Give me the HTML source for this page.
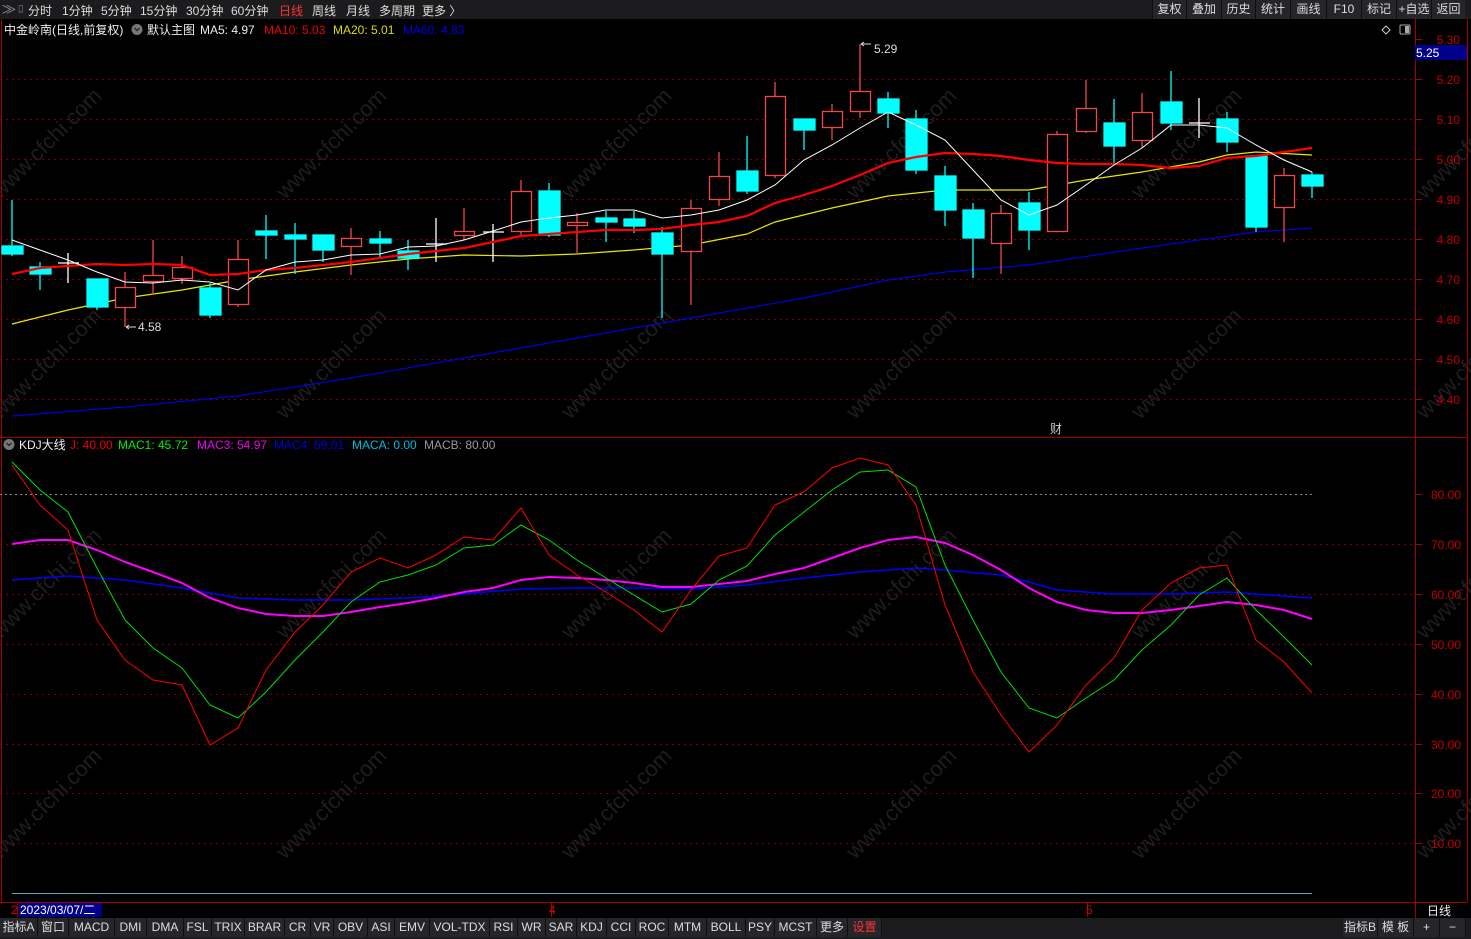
<!DOCTYPE html>
<html><head><meta charset="utf-8"><style>
*{margin:0;padding:0;box-sizing:border-box}
body{width:1471px;height:939px;background:#000;overflow:hidden;font-family:"Liberation Sans","Noto Sans CJK SC",sans-serif;position:relative}
.top{position:absolute;left:0;top:0;width:1471px;height:19px;background:#1c1c1e;color:#ddd;font-size:12px}
.top span{position:absolute;top:2px}
.tb{position:absolute;top:0;height:19px;background:#26262a;border-left:1px solid #0e0e0e;color:#ddd;font-size:12px;text-align:center;line-height:19px}
.bot{position:absolute;left:0;top:918px;width:1471px;height:21px;background:#1c1c1e}
.bt{position:absolute;top:0;height:19px;background:#26262a;color:#ddd;font-size:12px;line-height:19px;text-align:center;border-right:1px solid #0e0e0e}
svg{position:absolute;left:0;top:0}
</style></head><body>
<div class="top">
<span style="left:2px;color:#888">⨠▯</span>
<span style="left:28px">分时</span><span style="left:62px">1分钟</span><span style="left:101px">5分钟</span><span style="left:140px">15分钟</span><span style="left:186px">30分钟</span><span style="left:231px">60分钟</span><span style="left:279px;color:#f33">日线</span><span style="left:312px">周线</span><span style="left:346px">月线</span><span style="left:379px">多周期</span><span style="left:422px">更多 〉</span>
</div>
<div class="tb" style="left:1152px;width:34px">复权</div>
<div class="tb" style="left:1186px;width:35px">叠加</div>
<div class="tb" style="left:1221px;width:34px">历史</div>
<div class="tb" style="left:1255px;width:35px">统计</div>
<div class="tb" style="left:1290px;width:36px">画线</div>
<div class="tb" style="left:1326px;width:35px">F10</div>
<div class="tb" style="left:1361px;width:35px">标记</div>
<div class="tb" style="left:1396px;width:35px">+自选</div>
<div class="tb" style="left:1431px;width:34px">返回</div>

<svg width="1471" height="939" viewBox="0 0 1471 939" font-family="Liberation Sans, Noto Sans CJK SC, sans-serif" font-size="12">
<!-- watermarks -->
<g fill="#1e1e1e" font-size="22">
<text transform="translate(0,200) rotate(-45)">www.cfchi.com</text>
<text transform="translate(285,200) rotate(-45)">www.cfchi.com</text>
<text transform="translate(570,200) rotate(-45)">www.cfchi.com</text>
<text transform="translate(855,200) rotate(-45)">www.cfchi.com</text>
<text transform="translate(1140,200) rotate(-45)">www.cfchi.com</text>
<text transform="translate(1425,200) rotate(-45)">www.cfchi.com</text>
<text transform="translate(0,420) rotate(-45)">www.cfchi.com</text>
<text transform="translate(285,420) rotate(-45)">www.cfchi.com</text>
<text transform="translate(570,420) rotate(-45)">www.cfchi.com</text>
<text transform="translate(855,420) rotate(-45)">www.cfchi.com</text>
<text transform="translate(1140,420) rotate(-45)">www.cfchi.com</text>
<text transform="translate(1425,420) rotate(-45)">www.cfchi.com</text>
<text transform="translate(0,640) rotate(-45)">www.cfchi.com</text>
<text transform="translate(285,640) rotate(-45)">www.cfchi.com</text>
<text transform="translate(570,640) rotate(-45)">www.cfchi.com</text>
<text transform="translate(855,640) rotate(-45)">www.cfchi.com</text>
<text transform="translate(1140,640) rotate(-45)">www.cfchi.com</text>
<text transform="translate(1425,640) rotate(-45)">www.cfchi.com</text>
<text transform="translate(0,860) rotate(-45)">www.cfchi.com</text>
<text transform="translate(285,860) rotate(-45)">www.cfchi.com</text>
<text transform="translate(570,860) rotate(-45)">www.cfchi.com</text>
<text transform="translate(855,860) rotate(-45)">www.cfchi.com</text>
<text transform="translate(1140,860) rotate(-45)">www.cfchi.com</text>
<text transform="translate(1425,860) rotate(-45)">www.cfchi.com</text>
</g>
<!-- frame -->
<g stroke="#a00000" fill="none">
<line x1="1415.5" y1="19" x2="1415.5" y2="918"/>
<line x1="1467.5" y1="19" x2="1467.5" y2="902"/>
<line x1="0" y1="437.5" x2="1467" y2="437.5"/>
<line x1="0" y1="902.5" x2="1467" y2="902.5"/>
<line x1="1.5" y1="19" x2="1.5" y2="902"/>
</g>
<!-- price grid -->
<g stroke="#7a0000" stroke-dasharray="2,4">
<line x1="0" y1="79.5" x2="1414" y2="79.5"/><line x1="0" y1="119.5" x2="1414" y2="119.5"/><line x1="0" y1="159.5" x2="1414" y2="159.5"/><line x1="0" y1="199.5" x2="1414" y2="199.5"/><line x1="0" y1="239.5" x2="1414" y2="239.5"/><line x1="0" y1="279.5" x2="1414" y2="279.5"/><line x1="0" y1="319.5" x2="1414" y2="319.5"/><line x1="0" y1="359.5" x2="1414" y2="359.5"/><line x1="0" y1="399.5" x2="1414" y2="399.5"/>
<line x1="0" y1="544.5" x2="1414" y2="544.5"/><line x1="0" y1="594.5" x2="1414" y2="594.5"/><line x1="0" y1="644.5" x2="1414" y2="644.5"/><line x1="0" y1="694.5" x2="1414" y2="694.5"/><line x1="0" y1="744.5" x2="1414" y2="744.5"/><line x1="0" y1="793.5" x2="1414" y2="793.5"/><line x1="0" y1="843.5" x2="1414" y2="843.5"/>
</g>
<line x1="0" y1="494.5" x2="1312" y2="494.5" stroke="#888" stroke-dasharray="2,3"/>
<!-- ticks -->
<g stroke="#a00000"><line x1="1415" y1="39.5" x2="1422" y2="39.5"/><line x1="1415" y1="79.5" x2="1422" y2="79.5"/><line x1="1415" y1="119.5" x2="1422" y2="119.5"/><line x1="1415" y1="159.5" x2="1422" y2="159.5"/><line x1="1415" y1="199.5" x2="1422" y2="199.5"/><line x1="1415" y1="239.5" x2="1422" y2="239.5"/><line x1="1415" y1="279.5" x2="1422" y2="279.5"/><line x1="1415" y1="319.5" x2="1422" y2="319.5"/><line x1="1415" y1="359.5" x2="1422" y2="359.5"/><line x1="1415" y1="399.5" x2="1422" y2="399.5"/>
<line x1="1415" y1="494.5" x2="1422" y2="494.5"/><line x1="1415" y1="544.5" x2="1422" y2="544.5"/><line x1="1415" y1="594.5" x2="1422" y2="594.5"/><line x1="1415" y1="644.5" x2="1422" y2="644.5"/><line x1="1415" y1="694.5" x2="1422" y2="694.5"/><line x1="1415" y1="744.5" x2="1422" y2="744.5"/><line x1="1415" y1="793.5" x2="1422" y2="793.5"/><line x1="1415" y1="843.5" x2="1422" y2="843.5"/>
<line x1="551.5" y1="903" x2="551.5" y2="917"/><line x1="1087.5" y1="903" x2="1087.5" y2="917"/><line x1="17.5" y1="903" x2="17.5" y2="917"/></g>
<g fill="#c00000" text-anchor="end">
<text x="1460" y="44">5.30</text><text x="1460" y="84">5.20</text><text x="1460" y="124">5.10</text><text x="1460" y="164">5.00</text><text x="1460" y="204">4.90</text><text x="1460" y="244">4.80</text><text x="1460" y="284">4.70</text><text x="1460" y="324">4.60</text><text x="1460" y="364">4.50</text><text x="1460" y="404">4.40</text>
<text x="1461" y="499">80.00</text><text x="1461" y="549">70.00</text><text x="1461" y="599">60.00</text><text x="1461" y="649">50.00</text><text x="1461" y="699">40.00</text><text x="1461" y="749">30.00</text><text x="1461" y="798">20.00</text><text x="1461" y="848">10.00</text>
</g>
<rect x="1415" y="45" width="52" height="15" fill="#00008b"/>
<text x="1416" y="57" fill="#fff">5.25</text>
<!-- legends -->
<text x="4" y="34" fill="#eee">中金岭南(日线,前复权)</text>
<circle cx="137" cy="29.5" r="5.5" fill="#777"/><path d="M134.5 28 l2.5 2.5 l2.5 -2.5" stroke="#222" fill="none" stroke-width="1.3"/>
<text x="147" y="34" fill="#eee">默认主图</text>
<text x="200" y="34" fill="#eee">MA5: 4.97</text>
<text x="264" y="34" fill="#e00">MA10: 5.03</text>
<text x="333" y="34" fill="#dd0">MA20: 5.01</text>
<text x="403" y="34" fill="#0000e0">MA60: 4.83</text>
<path d="M1386 26 l4 4 l-4 4 l-4 -4z" stroke="#ccc" fill="none"/>
<rect x="1400" y="25" width="10" height="9" rx="1" stroke="#aaa" fill="none"/><rect x="1405" y="26" width="4" height="7" fill="#aaa"/>
<circle cx="9" cy="444.5" r="5.5" fill="#777"/><path d="M6.5 443 l2.5 2.5 l2.5 -2.5" stroke="#222" fill="none" stroke-width="1.3"/>
<text x="19" y="449" fill="#eee">KDJ大线</text>
<text x="70" y="449" fill="#e00">J: 40.00</text>
<text x="118" y="449" fill="#0e0">MAC1: 45.72</text>
<text x="197" y="449" fill="#e0e">MAC3: 54.97</text>
<text x="274" y="449" fill="#0000e0">MAC4: 59.01</text>
<text x="352" y="449" fill="#0bd">MACA: 0.00</text>
<text x="424" y="449" fill="#999">MACB: 80.00</text>
<text x="1050" y="433" fill="#ccc">财</text>
<!-- MA lines -->
<polyline fill="none" stroke="#0000e0" stroke-width="1.2" points="12,416 125,407 238,396 351,378 464,358 577,338 691,318 804,298 888,280 945,272 1029,265 1142,248 1256,232 1312,228"/>
<polyline fill="none" stroke="#e8e800" stroke-width="1.2" points="12,324 68,310 125,298 182,290 238,280 295,272 351,265 408,259 464,255 521,256 577,254 634,250 691,245 747,234 775,222 832,208 888,196 945,190 1029,190 1086,180 1142,172 1199,162 1227,155 1256,152 1312,155"/>
<!-- candles -->
<g stroke-width="1.3">
<g stroke="#0ff" fill="#0ff">
<line x1="12" y1="200" x2="12" y2="256"/><rect x="2" y="246" width="21" height="8"/>
<line x1="40" y1="262" x2="40" y2="290"/><rect x="30" y="267" width="21" height="7"/>
<line x1="97" y1="279" x2="97" y2="310"/><rect x="87" y="279" width="21" height="28"/>
<line x1="210" y1="283" x2="210" y2="318"/><rect x="200" y="288" width="21" height="27"/>
<line x1="266" y1="215" x2="266" y2="259"/><rect x="256" y="231" width="21" height="4"/>
<line x1="295" y1="223" x2="295" y2="274"/><rect x="285" y="235" width="21" height="4"/>
<line x1="323" y1="235" x2="323" y2="262"/><rect x="313" y="235" width="21" height="15"/>
<line x1="380" y1="231" x2="380" y2="259"/><rect x="370" y="239" width="21" height="4"/>
<line x1="408" y1="240" x2="408" y2="270"/><rect x="398" y="251" width="21" height="7"/>
<line x1="549" y1="183" x2="549" y2="237"/><rect x="539" y="191" width="21" height="44"/>
<line x1="606" y1="211" x2="606" y2="242"/><rect x="596" y="218" width="21" height="4"/>
<line x1="634" y1="211" x2="634" y2="233"/><rect x="624" y="219" width="21" height="7"/>
<line x1="662" y1="227" x2="662" y2="318"/><rect x="652" y="233" width="21" height="21"/>
<line x1="747" y1="136" x2="747" y2="194"/><rect x="737" y="171" width="21" height="20"/>
<line x1="804" y1="119" x2="804" y2="150"/><rect x="794" y="119" width="21" height="11"/>
<line x1="888" y1="92" x2="888" y2="128"/><rect x="878" y="99" width="21" height="14"/>
<line x1="916" y1="110" x2="916" y2="174"/><rect x="906" y="119" width="21" height="51"/>
<line x1="945" y1="166" x2="945" y2="226"/><rect x="935" y="176" width="21" height="34"/>
<line x1="973" y1="203" x2="973" y2="278"/><rect x="963" y="210" width="21" height="28"/>
<line x1="1029" y1="192" x2="1029" y2="250"/><rect x="1019" y="203" width="21" height="27"/>
<line x1="1114" y1="99" x2="1114" y2="163"/><rect x="1104" y="123" width="21" height="23"/>
<line x1="1171" y1="71" x2="1171" y2="130"/><rect x="1161" y="102" width="21" height="21"/>
<line x1="1227" y1="112" x2="1227" y2="152"/><rect x="1217" y="119" width="21" height="23"/>
<line x1="1256" y1="155" x2="1256" y2="232"/><rect x="1246" y="156" width="21" height="71"/>
<line x1="1312" y1="172" x2="1312" y2="198"/><rect x="1302" y="175" width="21" height="11"/>
</g>
<g stroke="#f04848" fill="#000">
<line x1="125" y1="272" x2="125" y2="327"/><rect x="115.5" y="287.5" width="20" height="20"/>
<line x1="153" y1="240" x2="153" y2="295"/><rect x="143.5" y="275.5" width="20" height="6"/>
<line x1="182" y1="256" x2="182" y2="284"/><rect x="172.5" y="267.5" width="20" height="11"/>
<line x1="238" y1="240" x2="238" y2="307"/><rect x="228.5" y="259.5" width="20" height="45"/>
<line x1="351" y1="228" x2="351" y2="275"/><rect x="341.5" y="238.5" width="20" height="8"/>
<line x1="464" y1="208" x2="464" y2="240"/><rect x="454.5" y="231.5" width="20" height="4"/>
<line x1="521" y1="180" x2="521" y2="236"/><rect x="511.5" y="191.5" width="20" height="40"/>
<line x1="577" y1="213" x2="577" y2="253"/><rect x="567.5" y="222.5" width="20" height="3"/>
<line x1="691" y1="200" x2="691" y2="305"/><rect x="681.5" y="208.5" width="20" height="43"/>
<line x1="719" y1="152" x2="719" y2="206"/><rect x="709.5" y="176.5" width="20" height="23"/>
<line x1="775" y1="82" x2="775" y2="178"/><rect x="765.5" y="96.5" width="20" height="79"/>
<line x1="832" y1="104" x2="832" y2="140"/><rect x="822.5" y="111.5" width="20" height="16"/>
<line x1="860" y1="44" x2="860" y2="118"/><rect x="850.5" y="91.5" width="20" height="20"/>
<line x1="1001" y1="205" x2="1001" y2="274"/><rect x="991.5" y="213.5" width="20" height="30"/>
<line x1="1057" y1="131" x2="1057" y2="231"/><rect x="1047.5" y="134.5" width="20" height="97"/>
<line x1="1086" y1="80" x2="1086" y2="133"/><rect x="1076.5" y="108.5" width="20" height="23"/>
<line x1="1142" y1="93" x2="1142" y2="148"/><rect x="1132.5" y="112.5" width="20" height="28"/>
<line x1="1284" y1="168" x2="1284" y2="242"/><rect x="1274.5" y="175.5" width="20" height="32"/>
</g>
<g stroke="#fff">
<line x1="68" y1="253" x2="68" y2="283"/><line x1="58" y1="263" x2="79" y2="263"/>
<line x1="436" y1="218" x2="436" y2="262"/><line x1="426" y1="244" x2="447" y2="244"/>
<line x1="493" y1="224" x2="493" y2="262"/><line x1="483" y1="232" x2="504" y2="232"/>
<line x1="1199" y1="98" x2="1199" y2="138"/><line x1="1189" y1="123" x2="1210" y2="123"/>
</g>
</g>
<polyline fill="none" stroke="#f00" stroke-width="2.2" points="12,274 40,268 68,266 97,264 125,265 153,264 182,265 210,275 238,274 266,270 295,268 323,265 351,262 380,258 408,254 436,251 464,248 493,242 521,236 549,234 577,232 606,230 634,230 662,229 691,225 719,222 747,216 775,203 804,195 832,186 860,175 888,163 916,157 945,153 973,154 1001,156 1029,160 1057,163 1086,164 1114,164 1142,165 1171,168 1199,166 1227,158 1256,156 1284,152 1312,148"/>
<polyline fill="none" stroke="#fff" stroke-width="1" points="12,240 40,250 68,260 97,272 125,282 153,283 182,280 210,282 238,290 266,270 295,262 323,260 351,255 380,254 408,247 436,246 464,240 493,231 521,222 549,218 577,215 606,210 634,210 662,218 691,215 719,210 747,200 775,185 804,160 832,145 860,128 888,112 916,125 945,140 973,170 1001,200 1029,215 1057,205 1086,185 1114,165 1142,148 1171,125 1199,125 1227,128 1256,145 1284,160 1312,172"/>
<text x="874" y="53" fill="#ddd">5.29</text><path d="M861 44 l3 -2 M861 44 l3 2 M861 44 h10" stroke="#ddd" fill="none"/>
<text x="138" y="331" fill="#ddd">4.58</text><path d="M126 327 l3 -2 M126 327 l3 2 M126 327 h10" stroke="#ddd" fill="none"/>
<!-- KDJ -->
<polyline fill="none" stroke="#0000ff" stroke-width="1.5" points="12,580 68,576 125,580 182,588 238,598 295,600 351,600 408,598 464,594 521,589 577,588 634,588 691,589 747,585 804,578 860,572 916,568 945,570 1001,575 1029,582 1057,590 1114,594 1171,594 1227,592 1284,596 1312,598"/>
<polyline fill="none" stroke="#f0f" stroke-width="2" points="12,544 40,540 68,540 97,550 125,562 153,572 182,583 210,598 238,608 266,614 295,616 323,616 351,612 380,607 408,603 436,598 464,592 493,588 521,580 549,577 577,578 606,580 634,583 662,587 691,587 719,584 747,581 775,574 804,568 832,558 860,548 888,540 916,537 945,543 973,555 1001,570 1029,588 1057,602 1086,610 1114,613 1142,613 1171,610 1199,606 1227,602 1256,605 1284,610 1312,619"/>
<polyline fill="none" stroke="#00e000" stroke-width="1" points="12,462 40,490 68,512 97,568 125,620 153,648 182,668 210,705 238,718 266,692 295,660 323,632 351,602 380,582 408,575 436,565 464,548 493,545 521,525 549,540 577,560 606,578 634,595 662,612 691,604 719,580 747,566 775,535 804,512 832,490 860,472 888,470 916,487 945,565 973,620 1001,672 1029,708 1057,718 1086,698 1114,680 1142,650 1171,625 1199,595 1227,578 1256,610 1284,637 1312,665"/>
<polyline fill="none" stroke="#f00" stroke-width="1" points="12,465 40,505 68,530 97,620 125,660 153,680 182,685 210,745 238,728 266,670 295,632 323,605 351,572 380,558 408,568 436,555 464,537 493,540 521,508 549,555 577,575 606,592 634,610 662,632 691,590 719,556 747,548 775,505 804,492 832,468 860,458 888,465 916,505 945,605 973,672 1001,715 1029,752 1057,725 1086,685 1114,658 1142,610 1171,583 1199,568 1227,565 1256,640 1284,662 1312,693"/>
<line x1="12" y1="893.5" x2="1312" y2="893.5" stroke="#5ab" stroke-width="1"/>
<!-- date row -->
<text x="11" y="914" fill="#d00">2</text>
<rect x="19" y="903" width="83" height="14" fill="#00008b"/>
<text x="20" y="914" fill="#fff">2023/03/07/二</text>
<text x="549" y="914" fill="#d00">4</text>
<text x="1086" y="914" fill="#d00">5</text>
<text x="1427" y="915" fill="#eee">日线</text>
</svg>

<div class="bot">
<div class="bt" style="left:0;width:38px">指标A</div><div class="bt" style="left:38px;width:31px">窗口</div><div class="bt" style="left:69px;width:46px">MACD</div><div class="bt" style="left:115px;width:32px">DMI</div><div class="bt" style="left:147px;width:37px">DMA</div><div class="bt" style="left:184px;width:28px">FSL</div><div class="bt" style="left:212px;width:33px">TRIX</div><div class="bt" style="left:245px;width:40px">BRAR</div><div class="bt" style="left:285px;width:26px">CR</div><div class="bt" style="left:311px;width:23px">VR</div><div class="bt" style="left:334px;width:34px">OBV</div><div class="bt" style="left:368px;width:27px">ASI</div><div class="bt" style="left:395px;width:35px">EMV</div><div class="bt" style="left:430px;width:60px">VOL-TDX</div><div class="bt" style="left:490px;width:28px">RSI</div><div class="bt" style="left:518px;width:28px">WR</div><div class="bt" style="left:546px;width:31px">SAR</div><div class="bt" style="left:577px;width:30px">KDJ</div><div class="bt" style="left:607px;width:29px">CCI</div><div class="bt" style="left:636px;width:33px">ROC</div><div class="bt" style="left:669px;width:38px">MTM</div><div class="bt" style="left:707px;width:39px">BOLL</div><div class="bt" style="left:746px;width:29px">PSY</div><div class="bt" style="left:775px;width:42px">MCST</div><div class="bt" style="left:817px;width:31px">更多</div><div class="bt" style="left:848px;width:34px;color:#f33">设置</div>
<div class="bt" style="left:1343px;width:35px">指标B</div><div class="bt" style="left:1378px;width:36px">模 板</div><div class="bt" style="left:1414px;width:26px">+</div><div class="bt" style="left:1440px;width:26px">−</div>
</div>
</body></html>
